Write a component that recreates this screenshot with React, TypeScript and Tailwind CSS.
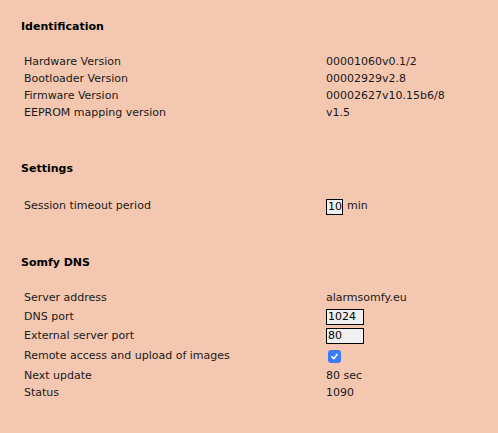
import React from 'react';

const rowsId = [
  ['Hardware Version', '00001060v0.1/2'],
  ['Bootloader Version', '00002929v2.8'],
  ['Firmware Version', '00002627v10.15b6/8'],
  ['EEPROM mapping version', 'v1.5'],
];

const Heading: React.FC<{ children: React.ReactNode }> = ({ children }) => (
  <h2 className="h-[17px] leading-[17px] pl-[21px] text-[11px] font-bold text-black">{children}</h2>
);

const Row: React.FC<{ label: string; h?: string; children: React.ReactNode }> = ({ label, h = 'h-[17px]', children }) => (
  <div className={`grid grid-cols-[302px_1fr] items-center pl-[24px] ${h}`}>
    <span>{label}</span>
    <div className="flex items-center">{children}</div>
  </div>
);

const Field: React.FC<{ value: string; w: string }> = ({ value, w }) => (
  <span className={`${w} h-[16px] border border-black bg-[#f0f0f0] leading-[14px] pl-px text-[11px] text-black`}>{value}</span>
);

export default function App() {
  return (
    <div className="w-[498px] h-[433px] bg-[#f4c7b0] text-[11px] text-[#1a1a1a] pt-[18px] overflow-hidden" style={{ fontFamily: '"DejaVu Sans", Verdana, sans-serif' }}>
      <Heading>Identification</Heading>
      <div className="mt-[19px]">
        {rowsId.map(([l, v]) => (
          <Row key={l} label={l}>{v}</Row>
        ))}
      </div>

      <div className="mt-[38px]">
        <Heading>Settings</Heading>
      </div>
      <div className="mt-[21px]">
        <Row label="Session timeout period">
          <Field value="10" w="w-[17px]" />
          <span className="ml-[4px]">min</span>
        </Row>
      </div>

      <div className="mt-[39px]">
        <Heading>Somfy DNS</Heading>
      </div>
      <div className="mt-[18px]">
        <Row label="Server address" h="h-[18px]">alarmsomfy.eu</Row>
        <Row label="DNS port" h="h-[20px]">
          <Field value="1024" w="w-[38px]" />
        </Row>
        <Row label="External server port" h="h-[18px]">
          <Field value="80" w="w-[38px]" />
        </Row>
        <Row label="Remote access and upload of images" h="h-[22px]">
          <span className="ml-[2px] w-[13px] h-[13px] rounded-[3px] bg-[#3b7cf5] flex items-center justify-center">
            <svg width="9" height="9" viewBox="0 0 10 10" fill="none">
              <path d="M2 5.3 L4.2 7.5 L8 2.6" stroke="white" strokeWidth="1.7" strokeLinecap="round" strokeLinejoin="round" />
            </svg>
          </span>
        </Row>
        <Row label="Next update" h="h-[18px]">80 sec</Row>
        <Row label="Status" h="h-[16px]">1090</Row>
      </div>
    </div>
  );
}
